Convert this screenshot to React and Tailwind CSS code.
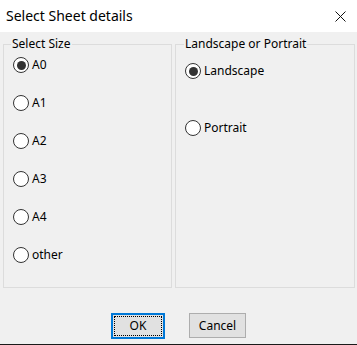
function Radio({ label, checked }) {
  return (
    <div className="flex items-center h-4 gap-[3px]">
      <span className="w-4 h-4 rounded-full border border-[#333333] bg-white flex items-center justify-center shrink-0">
        {checked && <span className="w-[9px] h-[9px] rounded-full bg-[#333333]" />}
      </span>
      <span className="text-[12px] text-black leading-4">{label}</span>
    </div>
  )
}

export default function App() {
  const sizes = ['A0', 'A1', 'A2', 'A3', 'A4', 'other']

  return (
    <div className="w-[357px] h-[345px] flex flex-col bg-[#f0f0f0] font-['Noto_Sans',sans-serif]">
      <div className="h-8 bg-white flex items-center justify-between pl-[6px] pr-[11px] shrink-0">
        <span className="text-[14px] text-black leading-5">Select Sheet details</span>
        <svg width="11" height="11" viewBox="0 0 11 11" className="mt-[1px]">
          <path d="M0.5 0.5 L10.5 10.5 M10.5 0.5 L0.5 10.5" stroke="#111" strokeWidth="1" />
        </svg>
      </div>

      <div className="flex-1 flex flex-col">
        <div className="flex gap-[3px] pl-[3px] pt-[4px]">
          <fieldset className="w-[169px] h-[252px] border border-[#dcdcdc]">
            <legend className="text-[12px] leading-4 px-[1px] ml-[7px] text-black">Select Size</legend>
            <div className="flex flex-col gap-[22px] pl-[9px] pt-[5px]">
              {sizes.map((s, i) => (
                <Radio key={s} label={s} checked={i === 0} />
              ))}
            </div>
          </fieldset>
          <fieldset className="w-[180px] h-[252px] border border-[#dcdcdc]">
            <legend className="text-[12px] leading-4 px-[1px] ml-[8px] text-black">Landscape or Portrait</legend>
            <div className="flex flex-col gap-[41px] pl-[9px] pt-[11px]">
              <Radio label="Landscape" checked />
              <Radio label="Portrait" />
            </div>
          </fieldset>
        </div>

        <div className="flex justify-center gap-6 mt-auto mb-[5px]">
          <button className="w-[54px] h-[26px] border-2 border-[#0078d7] bg-[#e1e1e1] p-[1px]">
            <span className="w-full h-full border border-dotted border-black flex items-center justify-center text-[12px] text-black">OK</span>
          </button>
          <button className="w-[57px] h-[25px] border border-[#adadad] bg-[#e1e1e1] flex items-center justify-center text-[12px] text-black">
            Cancel
          </button>
        </div>
      </div>
      <div className="h-px bg-[#1a1a1a] shrink-0" />
    </div>
  )
}
